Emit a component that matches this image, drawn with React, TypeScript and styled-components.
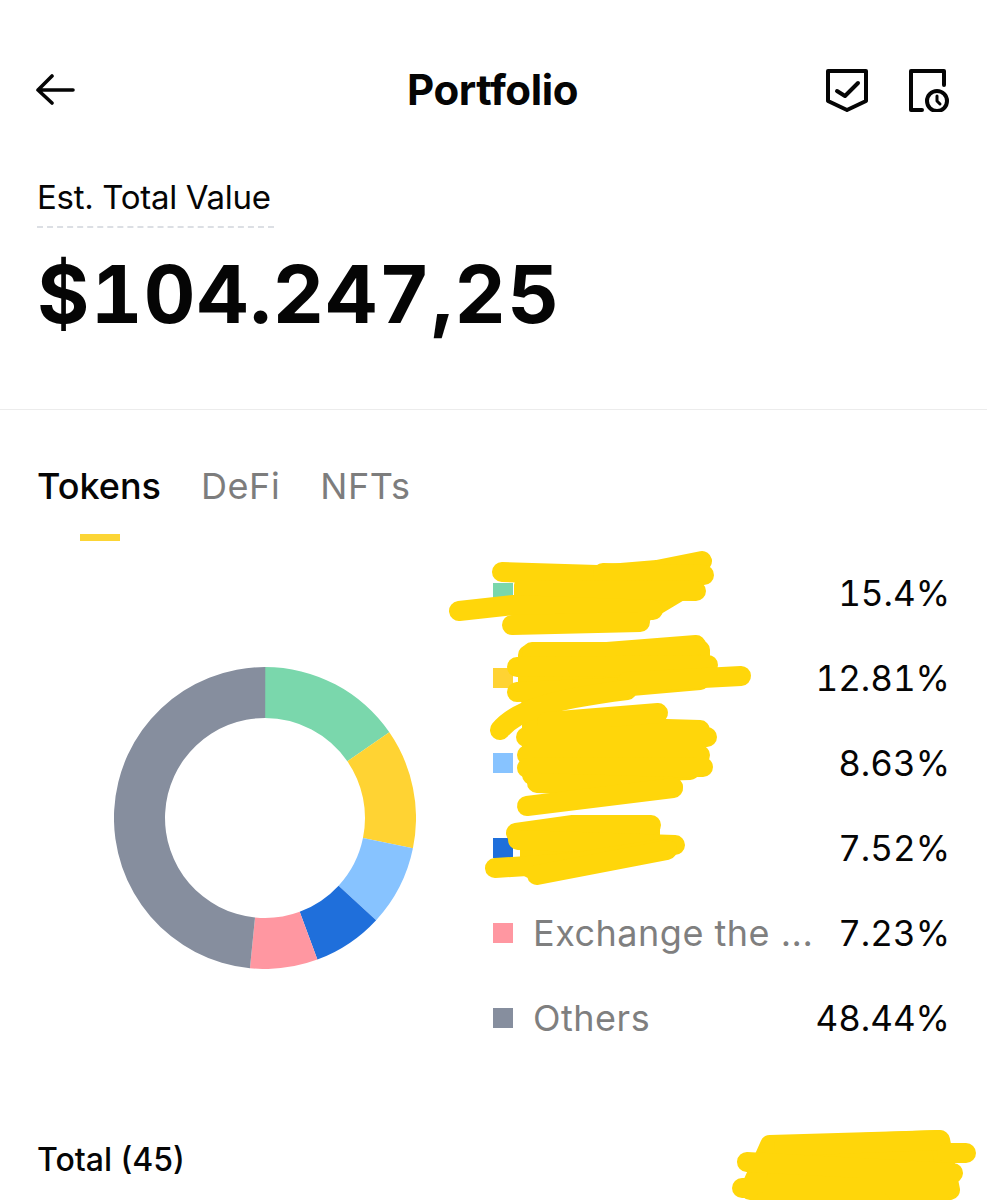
import React from "react";
import styled, { createGlobalStyle } from "styled-components";

const GlobalStyle = createGlobalStyle`
  html, body {
    margin: 0;
    padding: 0;
    background: #fff;
  }
  body {
    font-family: "Inter", "Liberation Sans", sans-serif;
    color: #050505;
  }
`;

const Page = styled.div`
  position: relative;
  width: 987px;
  height: 1200px;
  overflow: hidden;
  background: #fff;
`;

const Header = styled.header`
  display: grid;
  grid-template-columns: 1fr auto 1fr;
  align-items: center;
  height: 180px;
  padding: 0 38px 0 36px;
  box-sizing: border-box;
`;

const IconButton = styled.div`
  display: flex;
  width: 40px;
  height: 44px;
  align-items: center;
`;

const HeaderActions = styled.div`
  display: flex;
  justify-self: end;
  gap: 40px;
  align-items: center;
`;

const Title = styled.h1`
  margin: 0;
  font-size: 42px;
  font-weight: 700;
  line-height: 1;
  letter-spacing: -0.4px;
`;

const Summary = styled.section`
  height: 230px;
  box-sizing: border-box;
  padding: 0 37px;
  border-bottom: 1px solid #ececec;
`;

const ValueLabel = styled.div`
  width: fit-content;
  padding-right: 3px;
  font-size: 33px;
  line-height: 34px;
  padding-bottom: 12px;
  border-bottom: 2px dashed #dcdfe4;
  letter-spacing: -0.3px;
`;

const TotalValue = styled.div`
  margin-top: 16px;
  font-size: 80px;
  font-weight: 700;
  line-height: 100px;
  letter-spacing: 1.3px;
  font-variant-numeric: tabular-nums;
`;

const Tabs = styled.nav`
  display: flex;
  gap: 40px;
  padding: 54px 37px 0;
`;

const Tab = styled.div<{ $active?: boolean }>`
  position: relative;
  font-size: 36px;
  line-height: 44px;
  font-weight: ${(p) => (p.$active ? 500 : 400)};
  letter-spacing: ${(p) => (p.$active ? "0" : "0.6px")};
  color: ${(p) => (p.$active ? "#050505" : "#7d7d7d")};
  padding-bottom: 33px;

  &::after {
    content: "";
    display: ${(p) => (p.$active ? "block" : "none")};
    position: absolute;
    left: 43px;
    bottom: 0;
    width: 40px;
    height: 7px;
    background: #fcd535;
  }
`;

const Holdings = styled.section`
  display: flex;
  padding-top: 9px;
  height: 599px;
  box-sizing: border-box;
`;

const ChartBox = styled.div`
  flex: none;
  width: 493px;
  height: 535px;
  display: flex;
  align-items: center;
  padding-left: 114px;
  box-sizing: border-box;
`;

const Legend = styled.ul`
  flex: 1;
  margin: 0;
  padding: 0 37px 0 0;
  list-style: none;
`;

const LegendRow = styled.li`
  display: flex;
  align-items: center;
  height: 85px;
  font-size: 36px;
`;

const Swatch = styled.span<{ $color: string }>`
  flex: none;
  width: 20px;
  height: 20px;
  margin-right: 20px;
  background: ${(p) => p.$color};
`;

const LegendName = styled.span`
  flex: 1;
  color: #7f7f7f;
  white-space: nowrap;
  letter-spacing: 0.5px;
`;

const Percent = styled.span`
  color: #050505;
  font-size: 35px;
  font-variant-numeric: tabular-nums;
`;

const TotalRow = styled.div`
  display: flex;
  justify-content: space-between;
  padding: 0 37px;
  font-size: 32px;
  font-weight: 500;
  line-height: 40px;
`;

const TotalAmount = styled.span`
  font-size: 30px;
`;

const Scribble = styled.svg`
  position: absolute;
  inset: 0;
  pointer-events: none;
`;

const holdings = [
  { name: "", value: 15.4, label: "15.4%", color: "#7ad7ac" },
  { name: "", value: 12.81, label: "12.81%", color: "#ffd333" },
  { name: "", value: 8.63, label: "8.63%", color: "#87c3ff" },
  { name: "", value: 7.52, label: "7.52%", color: "#1f6fdb" },
  { name: "Exchange the ...", value: 7.23, label: "7.23%", color: "#ff97a1" },
  { name: "Others", value: 48.44, label: "48.44%", color: "#868e9e" },
];

const polar = (r: number, pct: number) => {
  const a = (pct / 100) * Math.PI * 2;
  return `${(151 + r * Math.sin(a)).toFixed(2)} ${(151 - r * Math.cos(a)).toFixed(2)}`;
};

const Donut: React.FC = () => {
  let start = 0;
  return (
    <svg width="302" height="302" viewBox="0 0 302 302">
      {holdings.map((h) => {
        const end = start + h.value;
        const large = h.value > 50 ? 1 : 0;
        const d = `M${polar(151, start)} A151 151 0 ${large} 1 ${polar(151, end)} L${polar(100, end)} A100 100 0 ${large} 0 ${polar(100, start)} Z`;
        start = end;
        return <path key={h.color} d={d} fill={h.color} />;
      })}
    </svg>
  );
};

const scribbleLines = [
  // row one
  "M502 572 L597 575 L657 570 L702 561",
  "M603 573 L704 575",
  "M524 590 L696 591",
  "M459 611 L513 605 L653 610",
  "M512 625 L640 622",
  // row two
  "M532 652 L607 652 L696 645",
  "M517 667 L708 665",
  "M517 692 L627 687",
  "M627 682 L741 676",
  "M500 730 C515 712 545 700 627 690",
  // row three
  "M547 722 L658 713",
  "M526 737 L707 737",
  "M527 755 L700 755",
  "M527 768 L703 767",
  "M537 783 L673 787",
  "M527 806 L673 788",
  // row four
  "M516 833 L573 825 L651 825",
  "M518 840 L675 845",
  "M495 868 L573 863 L667 848",
  "M537 875 L667 850",
  // total
  "M784 1146 L938 1140",
  "M947 1153 L966 1153",
  "M747 1162 L953 1173",
  "M742 1188 L948 1188",
  "M763 1202 L880 1202",
];

const scribbleFills = [
  "M524 585 L690 585 L640 615 L524 615 Z",
  "M528 655 L700 650 L700 680 L528 695 Z",
  "M532 725 L700 730 L690 770 L532 775 Z",
  "M530 835 L650 830 L650 850 L530 868 Z",
  "M770 1145 L940 1140 L950 1190 L750 1190 Z",
];

export default function App() {
  return (
    <Page>
      <GlobalStyle />
      <Header>
        <IconButton>
          <svg width="40" height="32" viewBox="0 0 40 32" fill="none" stroke="#050505" strokeWidth="3.6" strokeLinecap="round" strokeLinejoin="round">
            <path d="M2 16 H37 M16 2 L2 16 L16 29" />
          </svg>
        </IconButton>
        <Title>Portfolio</Title>
        <HeaderActions>
          <svg width="44" height="44" viewBox="825 67 44 44" fill="none" stroke="#050505" strokeWidth="4" strokeLinecap="round" strokeLinejoin="round">
            <path d="M828 70 H866 V100 L847 109 L828 100 Z" />
            <path d="M837 90 L845 95 L858 82" />
          </svg>
          <svg width="40" height="44" viewBox="909 67 40 44" fill="none" stroke="#050505" strokeWidth="4" strokeLinecap="round" strokeLinejoin="round">
            <path d="M922 109 H911 V70 H944 V84" />
            <circle cx="937" cy="100" r="10" />
            <path d="M937 95 V100 L940 103" strokeWidth="3" />
          </svg>
        </HeaderActions>
      </Header>
      <Summary>
        <ValueLabel>Est. Total Value</ValueLabel>
        <TotalValue>$104.247,25</TotalValue>
      </Summary>
      <Tabs>
        <Tab $active>Tokens</Tab>
        <Tab>DeFi</Tab>
        <Tab>NFTs</Tab>
      </Tabs>
      <Holdings>
        <ChartBox>
          <Donut />
        </ChartBox>
        <Legend>
          {holdings.map((h) => (
            <LegendRow key={h.color}>
              <Swatch $color={h.color} />
              <LegendName>{h.name}</LegendName>
              <Percent>{h.label}</Percent>
            </LegendRow>
          ))}
        </Legend>
      </Holdings>
      <TotalRow>
        <span>Total (45)</span>
        <TotalAmount>-</TotalAmount>
      </TotalRow>
      <Scribble width="987" height="1200" viewBox="0 0 987 1200" fill="none" stroke="#ffd60a" strokeWidth="20" strokeLinecap="round" strokeLinejoin="round">
        {scribbleFills.map((d) => (
          <path key={d} d={d} fill="#ffd60a" />
        ))}
        {scribbleLines.map((d) => (
          <path key={d} d={d} />
        ))}
      </Scribble>
    </Page>
  );
}
